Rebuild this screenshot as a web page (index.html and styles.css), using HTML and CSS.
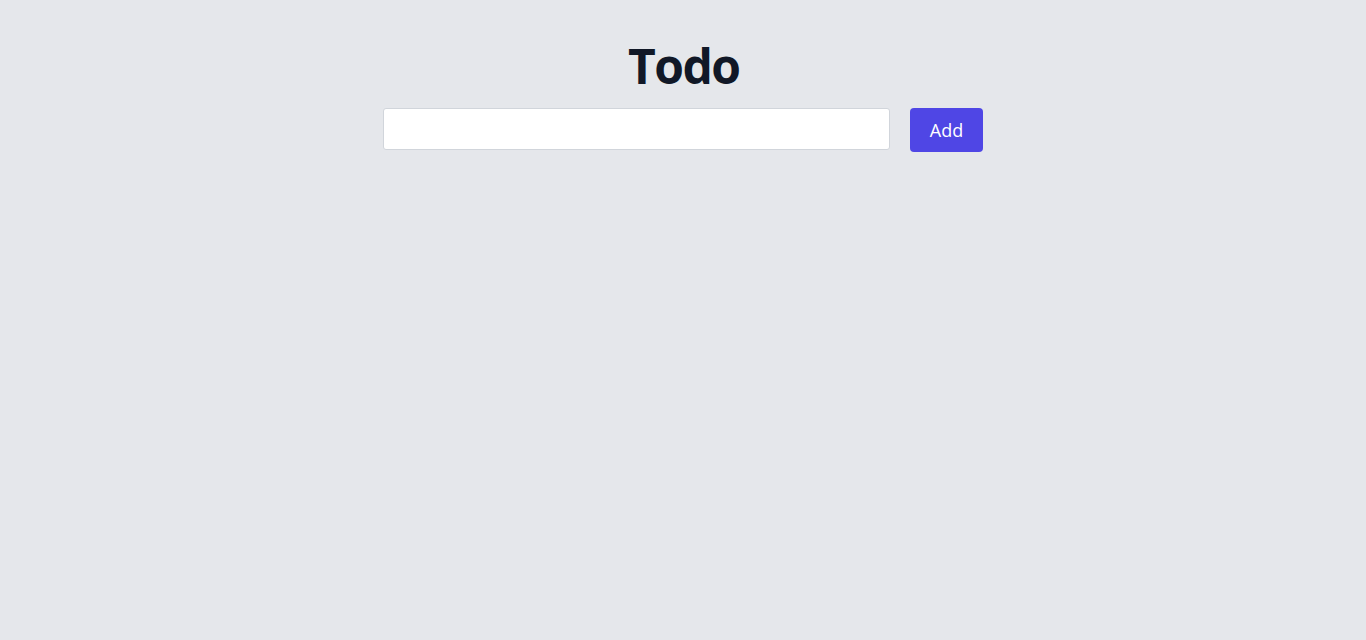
FILE: index.html
```html
<!DOCTYPE html>
<html lang="en">
<head>
<meta charset="utf-8">
<title>Todo</title>
<link rel="stylesheet" href="styles.css">
</head>
<body>
<main class="app">
  <h1 class="title">Todo</h1>
  <form class="add-form" onsubmit="return false">
    <input class="add-input" type="text" aria-label="New todo">
    <button class="add-button" type="submit">Add</button>
  </form>
</main>
</body>
</html>
```
FILE: styles.css
```css
html, body {
  margin: 0;
  padding: 0;
  background: #e5e7eb;
  height: 100%;
}
body {
  font-family: "Open Sans", "Noto Sans", sans-serif;
  color: #111827;
}
.app {
  width: 600px;
  margin: 0 auto;
  padding-top: 38px;
  display: flex;
  flex-direction: column;
  align-items: center;
}
.title {
  margin: 0 0 14px;
  font-size: 48px;
  line-height: 56px;
  font-weight: 700;
  letter-spacing: -1.5px;
  text-indent: 1.5px;
  color: #111827;
}
.add-form {
  width: 100%;
  display: flex;
  align-items: flex-start;
  gap: 20px;
}
.add-input {
  flex: 1;
  box-sizing: border-box;
  height: 42px;
  margin: 0;
  padding: 0 10px;
  border: 1px solid #d1d5db;
  border-radius: 3px;
  background: #fff;
  font: inherit;
  font-size: 16px;
  outline: none;
}
.add-button {
  box-sizing: border-box;
  height: 44px;
  width: 73px;
  margin: 0;
  padding: 0;
  border: none;
  border-radius: 4px;
  background: #4f46e5;
  color: #fff;
  font-family: inherit;
  font-size: 18px;
  cursor: pointer;
}
```
